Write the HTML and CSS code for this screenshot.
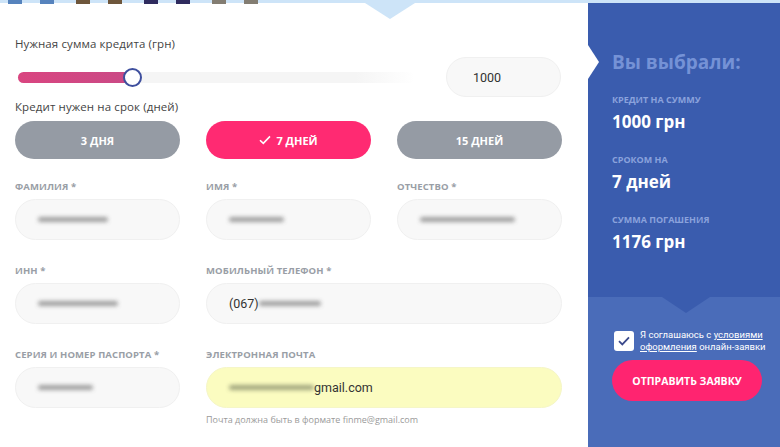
FILE: index.html
```html
<!DOCTYPE html>
<html lang="ru">
<head>
  <meta charset="UTF-8" />
  <title>Заявка на кредит</title>
  <link rel="stylesheet" href="styles.css">
</head>
<body>
  <div class="strip">
    <i class="sq b"></i><i class="sq b"></i><i class="sq br"></i><i class="sq br"></i>
    <i class="sq p"></i><i class="sq p"></i><i class="sq g"></i><i class="sq g"></i>
  </div>
  <div class="strip-arrow"></div>

  <div class="page">
    <!-- ФОРМА -->
    <main class="main">
      <div class="lbl">Нужная сумма кредита (грн)</div>
      <div class="amount">
        <div class="slider">
          <div class="fill"></div>
          <div class="thumb"></div>
        </div>
        <div class="input amount-input">1000</div>
      </div>

      <div class="lbl">Кредит нужен на срок (дней)</div>
      <div class="terms">
        <button class="term" type="button">3 ДНЯ</button>
        <button class="term active" type="button">
          <svg width="12" height="10" viewBox="0 0 12 10"><path d="M1 5.2 4.3 8.4 11 1.4" fill="none" stroke="#fff" stroke-width="1.6"/></svg>
          7 ДНЕЙ</button>
        <button class="term" type="button">15 ДНЕЙ</button>
      </div>

      <div class="fields">
        <div class="field">
          <label>ФАМИЛИЯ *</label>
          <div class="input"><span class="blur w70"></span></div>
        </div>
        <div class="field">
          <label>ИМЯ *</label>
          <div class="input"><span class="blur w55"></span></div>
        </div>
        <div class="field">
          <label>ОТЧЕСТВО *</label>
          <div class="input"><span class="blur w95"></span></div>
        </div>
        <div class="field">
          <label>ИНН *</label>
          <div class="input"><span class="blur w80"></span></div>
        </div>
        <div class="field span2">
          <label>МОБИЛЬНЫЙ ТЕЛЕФОН *</label>
          <div class="input"><span class="txt">(067)</span><span class="blur w60"></span></div>
        </div>
        <div class="field">
          <label>СЕРИЯ И НОМЕР ПАСПОРТА *</label>
          <div class="input"><span class="blur w55"></span></div>
        </div>
        <div class="field span2">
          <label>ЭЛЕКТРОННАЯ ПОЧТА</label>
          <div class="input autofill"><span class="blur w85 yel"></span><span class="txt">gmail.com</span></div>
          <small class="hint">Почта должна быть в формате finme@gmail.com</small>
        </div>
      </div>
    </main>

    <!-- ИТОГ -->
    <aside class="side">
      <div class="side-top">
        <div class="notch"></div>
        <h3>Вы выбрали:</h3>
        <div class="s-lbl">КРЕДИТ НА СУММУ</div>
        <div class="s-val">1000 грн</div>
        <div class="s-lbl">СРОКОМ НА</div>
        <div class="s-val">7 дней</div>
        <div class="s-lbl">СУММА ПОГАШЕНИЯ</div>
        <div class="s-val">1176 грн</div>
      </div>
      <div class="side-bottom">
        <div class="agree">
          <span class="chk"><svg width="12" height="10" viewBox="0 0 12 10"><path d="M1 5.2 4.3 8.4 11 1.4" fill="none" stroke="#3b4a8c" stroke-width="1.8"/></svg></span>
          <div class="agree-txt">
            <div>Я соглашаюсь с <u>условиями</u></div>
            <div><u>оформления</u> онлайн-заявки</div>
          </div>
        </div>
        <button class="send" type="button">ОТПРАВИТЬ ЗАЯВКУ</button>
      </div>
    </aside>
  </div>
</body>
</html>
```

FILE: styles.css
```css
body{margin:0;width:780px;height:447px;overflow:hidden;background:#fff;font-family:"Open Sans",Arial,sans-serif;position:relative}
.strip{height:3px;background:#cde4f8;display:flex;padding-left:8px}
.sq{display:block;width:14px;height:4px;margin-right:18px}
.sq:nth-child(2n){margin-right:22px}
.sq.b{background:#5683bd}
.sq.br{background:#6e563b}
.sq.p{background:#2f2b5e}
.sq.g{background:#837d72}
.strip-arrow{position:absolute;left:365px;top:3px;width:0;height:0;border-left:25px solid transparent;border-right:25px solid transparent;border-top:16px solid #cde4f8}

.page{display:flex;height:444px}
.main{width:547px;padding:33px 26px 0 15px;box-sizing:content-box}
.lbl{font-size:11.5px;line-height:16px;color:#444;letter-spacing:.1px}

.amount{display:flex;align-items:center;margin:5px 0 2px;height:40px}
.slider{position:relative;width:397px;height:11px;margin-left:3px;border-radius:6px;background:linear-gradient(90deg,#f5f5f5 85%,#fff)}
.slider .fill{width:118px;height:100%;border-radius:6px 0 0 6px;background:linear-gradient(90deg,#d94580,#c94a86)}
.slider .thumb{position:absolute;left:105px;top:-4px;width:15px;height:15px;border-radius:50%;background:#fff;border:2px solid #3e4f9e}
.input{height:41px;box-sizing:border-box;border:1px solid #f0f0f0;background:#f8f8f8;border-radius:21px;display:flex;align-items:center;padding-left:22px;font-family:Roboto,Arial,sans-serif;font-size:12.5px;color:#333}
.amount-input{margin-left:31px;width:115px;height:40px;padding-left:26px}

.terms{display:grid;grid-template-columns:repeat(3,165px);column-gap:26px;margin-top:6px}
.term{height:38px;border:none;border-radius:19px;background:#959ba4;color:#fff;font-family:"Open Sans",Arial,sans-serif;font-weight:700;font-size:11px;display:flex;align-items:center;justify-content:center;gap:5px;cursor:pointer}
.term.active{background:#ff2a72}

.fields{display:grid;grid-template-columns:repeat(3,165px);column-gap:26px;margin-top:22px}
.field{margin-bottom:25px}
.span2{grid-column:span 2}
.field label{display:block;font-size:9.5px;line-height:12px;font-weight:700;color:#999ea6;margin-bottom:6px;letter-spacing:.1px}
.autofill{background:#fbfcc0;border-color:#f5f6c8}
.hint{display:block;font-size:9px;color:#9a9a9a;margin-top:5px}
.txt{color:#333}
.blur{display:inline-block;height:5px;border-radius:3px;background:#8e8e8e;filter:blur(2px);opacity:.85}
.blur.yel{background:#8f9470}
.w55{width:55px}.w60{width:62px}.w70{width:70px}.w80{width:80px}.w85{width:85px}.w95{width:95px}

.side{flex:1;display:flex;flex-direction:column;color:#fff}
.side-top{position:relative;background:#3a5cae;height:294px;padding:46px 0 0 24px;box-sizing:border-box}
.side-top::after{content:"";position:absolute;left:74px;bottom:-16px;border-left:24px solid transparent;border-right:24px solid transparent;border-top:16px solid #3a5cae;z-index:1}
.notch{position:absolute;left:0;top:42px;border-top:17px solid transparent;border-bottom:17px solid transparent;border-left:11px solid #fff}
.side h3{margin:0 0 19px;font-size:19px;line-height:26px;font-weight:700;color:#7592d6}
.s-lbl{font-size:9px;line-height:12px;font-weight:700;color:#8aa2dc;margin-bottom:5px}
.s-val{font-size:17px;line-height:22px;font-weight:700;margin-bottom:21px}
.side-bottom{flex:1;background:#4a6cb9;padding:32px 0 0 26px}
.agree{display:flex;gap:6px;align-items:center}
.agree-txt{font-family:Roboto,Arial,sans-serif;font-size:9.5px;line-height:12px;white-space:nowrap}
.chk{flex:none;width:20px;height:20px;background:#fff;border-radius:3px;display:flex;align-items:center;justify-content:center}
.send{margin:7px 0 0 -2px;width:150px;height:41px;border:none;border-radius:21px;background:#ff2470;color:#fff;font-family:"Open Sans",Arial,sans-serif;font-weight:700;font-size:10.5px;cursor:pointer}
```
